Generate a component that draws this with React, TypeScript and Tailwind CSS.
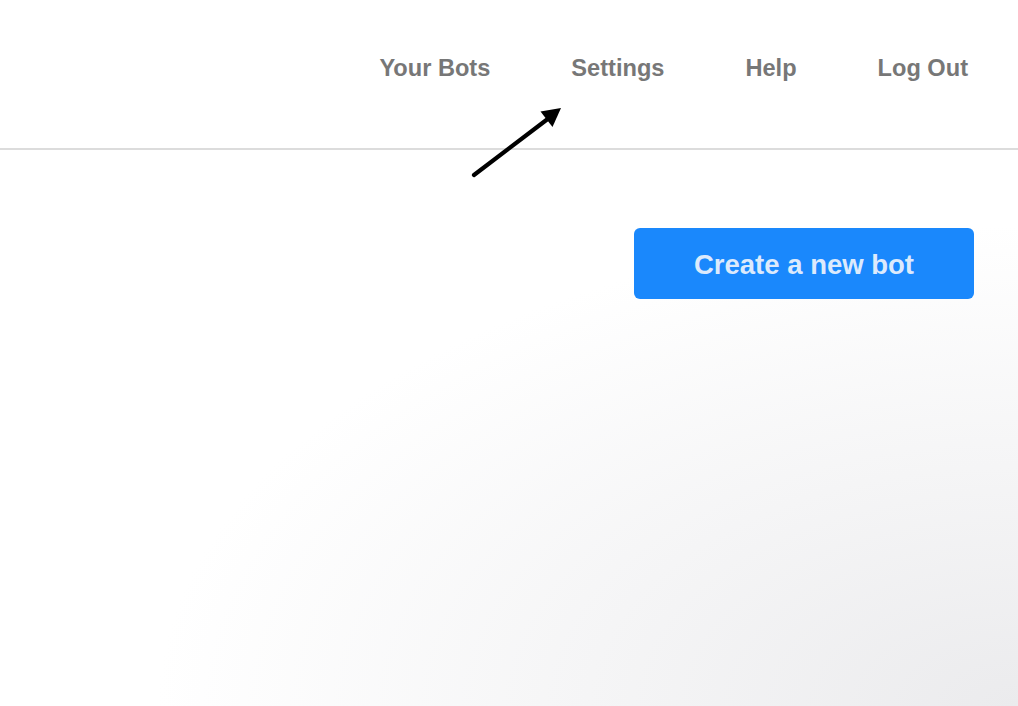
import React from 'react';

const navItems = ['Your Bots', 'Settings', 'Help', 'Log Out'];

const Arrow: React.FC = () => (
  <svg
    className="pointer-events-none absolute left-[460px] top-[95px]"
    width="120"
    height="90"
    viewBox="0 0 120 90"
  >
    <line x1="14" y1="80" x2="89" y2="23" stroke="#000" strokeWidth="4.2" strokeLinecap="round" />
    <polygon points="101,13 92.5,32 80.5,16.5" fill="#000" />
  </svg>
);

export default function App() {
  return (
    <div
      className="relative h-[706px] w-full overflow-hidden bg-[radial-gradient(ellipse_860px_480px_at_100%_100%,#ebebed_0%,#f5f5f6_50%,#ffffff_100%)]"
      style={{ fontFamily: '"Liberation Sans", Arial, Helvetica, sans-serif' }}
    >
      <header className="flex h-[150px] items-start justify-end border-b-2 border-[#dcdcdc] bg-white pr-[50px] pt-[52px]">
        <nav className="flex gap-[81px]">
          {navItems.map((item) => (
            <a key={item} href="#" className="text-[23.6px] font-bold leading-[32px] text-[#777777]">
              {item}
            </a>
          ))}
        </nav>
      </header>
      <main className="flex justify-end pr-[44px] pt-[78px]">
        <button className="flex h-[71px] w-[340px] items-center justify-center rounded-[6px] bg-[#1a88fc] pt-[2px] text-[27.5px] font-bold text-[#dceafc]">
          Create a new bot
        </button>
      </main>
      <Arrow />
    </div>
  );
}
